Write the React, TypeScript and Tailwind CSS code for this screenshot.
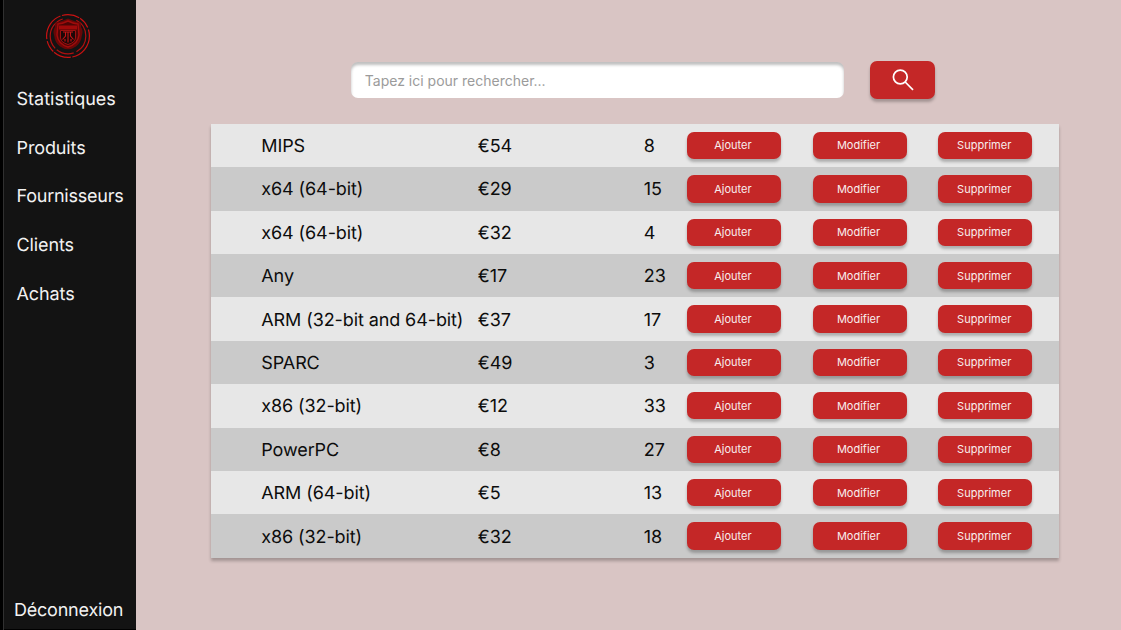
const links = [
  { label: 'Statistiques', tracking: 'tracking-normal' },
  { label: 'Produits', tracking: 'tracking-[-0.120px]' },
  { label: 'Fournisseurs', tracking: 'tracking-[-0.240px]' },
  { label: 'Clients', tracking: 'tracking-[-0.100px]' },
  { label: 'Achats', tracking: 'tracking-[-0.100px]' },
];

const products: [string, number, number][] = [
  ['MIPS', 54, 8],
  ['x64 (64-bit)', 29, 15],
  ['x64 (64-bit)', 32, 4],
  ['Any', 17, 23],
  ['ARM (32-bit and 64-bit)', 37, 17],
  ['SPARC', 49, 3],
  ['x86 (32-bit)', 12, 33],
  ['PowerPC', 8, 27],
  ['ARM (64-bit)', 5, 13],
  ['x86 (32-bit)', 32, 18],
];

function Logo() {
  return (
    <svg className="ml-[42px] h-[46px] w-[46px]" viewBox="0 0 46 46" fill="none">
      <circle cx="23" cy="23" r="21.400" stroke="#c91212" strokeWidth="1.200" strokeDasharray="29 1.500 18 1 12 2" />
      <circle cx="23" cy="23" r="17.800" stroke="#b01010" strokeWidth="1.200" strokeDasharray="19 3 18 2 36 14 20" />
      <path d="M11 9.500Q18 8 23 5.500Q28 8 35 9.500Q36.500 11 36 14Q38.500 18 37 22Q36 30 31 33.500Q23 39 15 33.500Q10 30 9 22Q7.500 18 10 14Q9.500 11 11 9.500Z" fill="#680707" />
      <path d="M13 11Q18 10.500 23 8Q28 10.500 33 11L34 22Q33 31 23 34Q13 31 12 22Z" fill="#4d0606" stroke="#a00c0c" strokeWidth="1.500" />
      <path d="M14 12.500H32V16.500H14Z" fill="#a00a0a" />
      <path d="M15.500 17.500V25Q16 29.500 23 31.500Q30 29.500 30.500 25V17.500Z" fill="#1c0808" stroke="#9c1010" />
      <path d="M18 19H28M23 19V29.500M20.500 19V23L17.500 26.500M25.500 19V23L28.500 26.500M20 28.500V26M26 28.500V26" stroke="#c51515" strokeWidth="1.100" />
    </svg>
  );
}

function Action({ label }: { label: string }) {
  return (
    <button className="mr-[31.700px] flex h-[27.300px] w-[94px] shrink-0 items-center justify-center rounded-[7px] bg-[#c42727] pt-px pr-[2.500px] text-[11px] leading-none tracking-normal text-[#f8eeee] shadow-[0_3px_3px_rgba(0,0,0,0.250)]">
      {label}
    </button>
  );
}

export default function App() {
  return (
    <div className="flex h-[630px] w-[1121px] overflow-hidden bg-[#d9c5c4] font-['Inter',sans-serif] [text-rendering:geometricPrecision]">
      <aside className="flex w-[136.300px] shrink-0 flex-col border-l-[3px] border-black bg-[#131313] text-[18px] text-[#f2f2f2] shadow-[inset_1px_0_0_#303030,inset_0_-1px_0_#000]">
        <div className="pt-[13px]"><Logo /></div>
        <nav className="mt-[29.100px] flex flex-col gap-[24.700px] pl-[13.500px]">
          {links.map((l) => <a key={l.label} className={`h-[24px] leading-[24px] ${l.tracking}`}>{l.label}</a>)}
        </nav>
        <a className="mt-auto mb-[7px] h-[24px] pl-[11px] leading-[24px] tracking-[-0.220px]">Déconnexion</a>
      </aside>
      <main className="flex flex-1 flex-col pl-[75px]">
        <div className="flex items-start pt-[61px] pl-[140.200px]">
          <input
            className="mt-[0.500px] h-[36.500px] w-[493px] rounded-[7px] bg-white px-[13.300px] pt-[2px] text-[14px] shadow-[inset_0_3px_3px_rgba(0,0,0,0.250)] outline-none placeholder:text-[#9b9b9b]"
            placeholder="Tapez ici pour rechercher..."
          />
          <button aria-label="Rechercher" className="ml-[25.300px] flex h-[38px] w-[65px] items-center justify-center rounded-[7px] bg-[#c42727] pl-px shadow-[0_3px_3px_rgba(0,0,0,0.250)]">
            <svg className="h-[22px] w-[22px]" viewBox="0 0 22 22" fill="none" stroke="white" strokeWidth="1.700">
              <circle cx="8.300" cy="8" r="6.900" />
              <path d="M13.200 13L21 20.800" />
            </svg>
          </button>
        </div>
        <div className="mt-[24.800px] w-[848px] shadow-[0_3px_3px_rgba(0,0,0,0.250)]">
          {products.map(([name, price, qty], i) => (
            <div key={i} className="flex h-[43.400px] items-center bg-[#cacaca] pl-[50px] text-[18px] tracking-[-0.100px] text-[#0c0c0c] odd:bg-[#e7e7e7]">
              <span className="w-[216.500px] shrink-0 pt-[2px] whitespace-nowrap">{name}</span>
              <span className="w-[166px] shrink-0 pt-[2px]">€{price}</span>
              <span className="w-[43.300px] shrink-0 pt-[2px]">{qty}</span>
              <Action label="Ajouter" />
              <Action label="Modifier" />
              <Action label="Supprimer" />
            </div>
          ))}
        </div>
      </main>
    </div>
  );
}
